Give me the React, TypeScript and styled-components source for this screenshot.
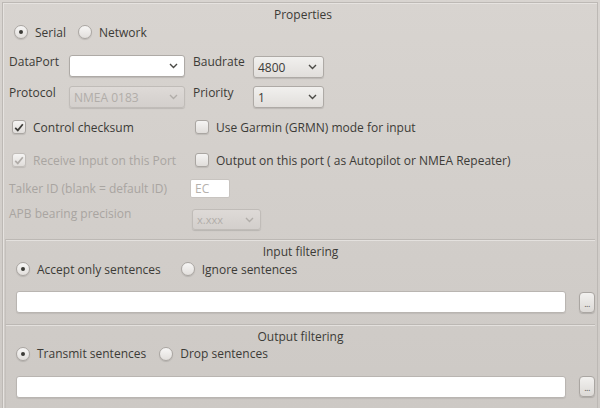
import React from "react";
import styled, { createGlobalStyle, css } from "styled-components";

const Global = createGlobalStyle`
  html, body { margin: 0; padding: 0; }
  body {
    width: 600px; height: 408px; overflow: hidden;
    background: #d3cfcb;
    font-family: "Open Sans", "DejaVu Sans", sans-serif;
    font-size: 12px;
    color: #3c3b37;
  }
`;

const Window = styled.div`
  width: 600px;
  height: 408px;
  box-sizing: border-box;
  padding: 2px 2px 0 2px;
  background: linear-gradient(#d8d4d0, #cdc9c5);
`;

const Frame = styled.div`
  height: 100%;
  box-sizing: border-box;
  border: 1px solid #bdb9b5;
  border-bottom: none;
  box-shadow: inset 1px 1px 0 #e6e3e0;
  display: flex;
  flex-direction: column;
`;

const Title = styled.div<{ $h?: number }>`
  text-align: center;
  height: ${(p) => p.$h ?? 24}px;
  line-height: ${(p) => p.$h ?? 24}px;
`;

const Props = styled.div`
  padding: 0 0 0 6px;
  display: flex;
  flex-direction: column;
`;

const Row = styled.div<{ $h: number; $align?: string; $mt?: number; $pl?: number }>`
  display: flex;
  align-items: ${(p) => p.$align ?? "center"};
  height: ${(p) => p.$h}px;
  margin-top: ${(p) => p.$mt ?? 0}px;
  padding-left: ${(p) => p.$pl ?? 0}px;
`;

const Cell = styled.div<{ $w?: number; $dim?: boolean; $pt?: number; $pl?: number }>`
  display: flex;
  align-items: center;
  box-sizing: border-box;
  ${(p) => p.$w !== undefined && css`width: ${p.$w}px; flex: none;`}
  ${(p) => p.$dim && css`color: #a9a5a1;`}
  padding-top: ${(p) => p.$pt ?? 0}px;
  padding-left: ${(p) => p.$pl ?? 0}px;
  white-space: nowrap;
`;

const RadioCircle = styled.span<{ $on?: boolean }>`
  width: 14px;
  height: 14px;
  box-sizing: border-box;
  border-radius: 50%;
  border: 1px solid #aaa6a2;
  background: linear-gradient(#f7f6f5, #e2dfdc);
  box-shadow: 0 1px 1px rgba(0, 0, 0, 0.12);
  display: inline-flex;
  align-items: center;
  justify-content: center;
  margin-right: 7px;
  flex: none;
  &::after {
    content: "";
    width: 4px;
    height: 4px;
    border-radius: 50%;
    background: ${(p) => (p.$on ? "#3c3b37" : "transparent")};
  }
`;

const Radio = styled.label<{ $gap?: number }>`
  display: inline-flex;
  align-items: center;
  margin-right: ${(p) => p.$gap ?? 12}px;
`;

const Box = styled.span<{ $dim?: boolean }>`
  width: 14px;
  height: 14px;
  box-sizing: border-box;
  border-radius: 3px;
  border: 1px solid ${(p) => (p.$dim ? "#c2beba" : "#aaa6a2")};
  background: linear-gradient(#f5f4f3, #e0ddda);
  box-shadow: 0 1px 1px rgba(0, 0, 0, 0.1);
  display: inline-flex;
  align-items: center;
  justify-content: center;
  margin-right: 7px;
  flex: none;
  color: ${(p) => (p.$dim ? "#b0aca8" : "#3c3b37")};
`;

const Check = styled.label<{ $dim?: boolean }>`
  display: inline-flex;
  align-items: center;
  color: ${(p) => (p.$dim ? "#a9a5a1" : "#3c3b37")};
`;

const Combo = styled.div<{ $w: number; $white?: boolean; $dim?: boolean; $h?: number; $mt?: number }>`
  width: ${(p) => p.$w}px;
  height: ${(p) => p.$h ?? 22}px;
  margin-top: ${(p) => p.$mt ?? 0}px;
  box-sizing: border-box;
  border-radius: 3px;
  border: 1px solid ${(p) => (p.$dim ? "#c0bcb8" : "#aeaaa6")};
  background: ${(p) =>
    p.$white ? "#ffffff" : p.$dim ? "linear-gradient(#dedad7, #d3cfcc)" : "linear-gradient(#f1f0ee, #e1dedb)"};
  box-shadow: 0 1px 1px rgba(0, 0, 0, 0.12);
  display: flex;
  align-items: center;
  justify-content: space-between;
  padding: 0 6px 0 4px;
  color: ${(p) => (p.$dim ? "#b1ada9" : "#3c3b37")};
  font-size: 12px;
  flex: none;
`;

const ComboText = styled.span<{ $small?: boolean }>`
  font-size: ${(p) => (p.$small ? 11 : 12)}px;
`;

const Chevron = ({ dim }: { dim?: boolean }) => (
  <svg width="9" height="6" viewBox="0 0 9 6">
    <path d="M1 1 L4.5 4.5 L8 1" fill="none" stroke={dim ? "#b1ada9" : "#4a4945"} strokeWidth="1.4" />
  </svg>
);

const Tick = () => (
  <svg width="10" height="9" viewBox="0 0 10 9">
    <path d="M1.2 4.8 L3.8 7.4 L8.8 1.2" fill="none" stroke="currentColor" strokeWidth="1.7" />
  </svg>
);

const SmallInput = styled.div`
  width: 40px;
  height: 19px;
  box-sizing: border-box;
  background: #fff;
  border: 1px solid #c8c4c0;
  border-radius: 2px;
  color: #b5b1ad;
  padding-left: 4px;
  line-height: 17px;
  font-size: 12px;
`;

const Spacer = styled.div<{ $h: number }>`
  height: ${(p) => p.$h}px;
  flex: none;
`;

const Group = styled.div<{ $h: number }>`
  margin: 0 2px 0 2px;
  height: ${(p) => p.$h}px;
  box-sizing: border-box;
  border-top: 1px solid #bcb8b4;
  border-left: 1px solid #c4c0bc;
  box-shadow: inset 0 1px 0 #e4e1de;
  display: flex;
  flex-direction: column;
`;

const FieldRow = styled.div`
  display: flex;
  align-items: center;
  margin-top: 17px;
  padding-left: 10px;
`;

const TextField = styled.div`
  width: 552px;
  height: 22px;
  box-sizing: border-box;
  background: #fff;
  border: 1px solid #b9b5b1;
  border-radius: 3px;
  box-shadow: 0 1px 1px rgba(0, 0, 0, 0.08);
`;

const DotButton = styled.div`
  margin-left: 13px;
  width: 16px;
  height: 21px;
  box-sizing: border-box;
  border: 1px solid #aaa6a2;
  border-radius: 4px;
  background: linear-gradient(#f2f1ef, #dcd9d6);
  box-shadow: 0 1px 1px rgba(0, 0, 0, 0.15);
  font-size: 9px;
  color: #5a5955;
  display: flex;
  align-items: flex-end;
  justify-content: center;
  padding-bottom: 2px;
  letter-spacing: -0.5px;
`;

export default function App() {
  return (
    <>
      <Global />
      <Window>
        <Frame>
          <Props>
            <Title $h={24}>Properties</Title>
            <Row $h={16} $mt={-3} $pl={5}>
              <Radio $gap={12}>
                <RadioCircle $on />
                Serial
              </Radio>
              <Radio>
                <RadioCircle />
                Network
              </Radio>
            </Row>
            <Spacer $h={12} />
            <Row $h={32} $align="flex-start">
              <Cell $w={60} $pt={1}>DataPort</Cell>
              <Combo $w={116} $white $mt={3}>
                <span />
                <Chevron />
              </Combo>
              <Cell $w={68} $pl={8} $pt={1}>Baudrate</Cell>
              <Combo $w={71} $mt={4}>
                <ComboText>4800</ComboText>
                <Chevron />
              </Combo>
            </Row>
            <Row $h={28} $align="flex-start">
              <Cell $w={60}>Protocol</Cell>
              <Combo $w={116} $dim $mt={2}>
                <ComboText>NMEA 0183</ComboText>
                <Chevron dim />
              </Combo>
              <Cell $w={68} $pl={8}>Priority</Cell>
              <Combo $w={71} $mt={2}>
                <ComboText>1</ComboText>
                <Chevron />
              </Combo>
            </Row>
            <Row $h={30}>
              <Cell $w={186} $pl={3}>
                <Check>
                  <Box>
                    <Tick />
                  </Box>
                  Control checksum
                </Check>
              </Cell>
              <Cell>
                <Check>
                  <Box />
                  Use Garmin (GRMN) mode for input
                </Check>
              </Cell>
            </Row>
            <Row $h={36}>
              <Cell $w={186} $pl={3}>
                <Check $dim>
                  <Box $dim>
                    <Tick />
                  </Box>
                  Receive Input on this Port
                </Check>
              </Cell>
              <Cell>
                <Check>
                  <Box />
                  Output on this port ( as Autopilot or NMEA Repeater)
                </Check>
              </Cell>
            </Row>
            <Row $h={20}>
              <Cell $w={181} $dim>Talker ID (blank = default ID)</Cell>
              <SmallInput>EC</SmallInput>
            </Row>
            <Row $h={33} $align="flex-start">
              <Cell $w={183} $dim $pt={7}>APB bearing precision</Cell>
              <Combo $w={69} $h={21} $dim $mt={11}>
                <ComboText $small>x.xxx</ComboText>
                <Chevron dim />
              </Combo>
            </Row>
          </Props>
          <Spacer $h={8} />
          <Group $h={85}>
            <Title $h={24}>Input filtering</Title>
            <Row $h={10} $pl={10}>
              <Radio $gap={20}>
                <RadioCircle $on />
                Accept only sentences
              </Radio>
              <Radio>
                <RadioCircle />
                Ignore sentences
              </Radio>
            </Row>
            <FieldRow>
              <TextField />
              <DotButton>...</DotButton>
            </FieldRow>
          </Group>
          <Group $h={85}>
            <Title $h={24}>Output filtering</Title>
            <Row $h={10} $pl={10}>
              <Radio $gap={13}>
                <RadioCircle $on />
                Transmit sentences
              </Radio>
              <Radio>
                <RadioCircle />
                Drop sentences
              </Radio>
            </Row>
            <FieldRow>
              <TextField />
              <DotButton>...</DotButton>
            </FieldRow>
          </Group>
        </Frame>
      </Window>
    </>
  );
}
